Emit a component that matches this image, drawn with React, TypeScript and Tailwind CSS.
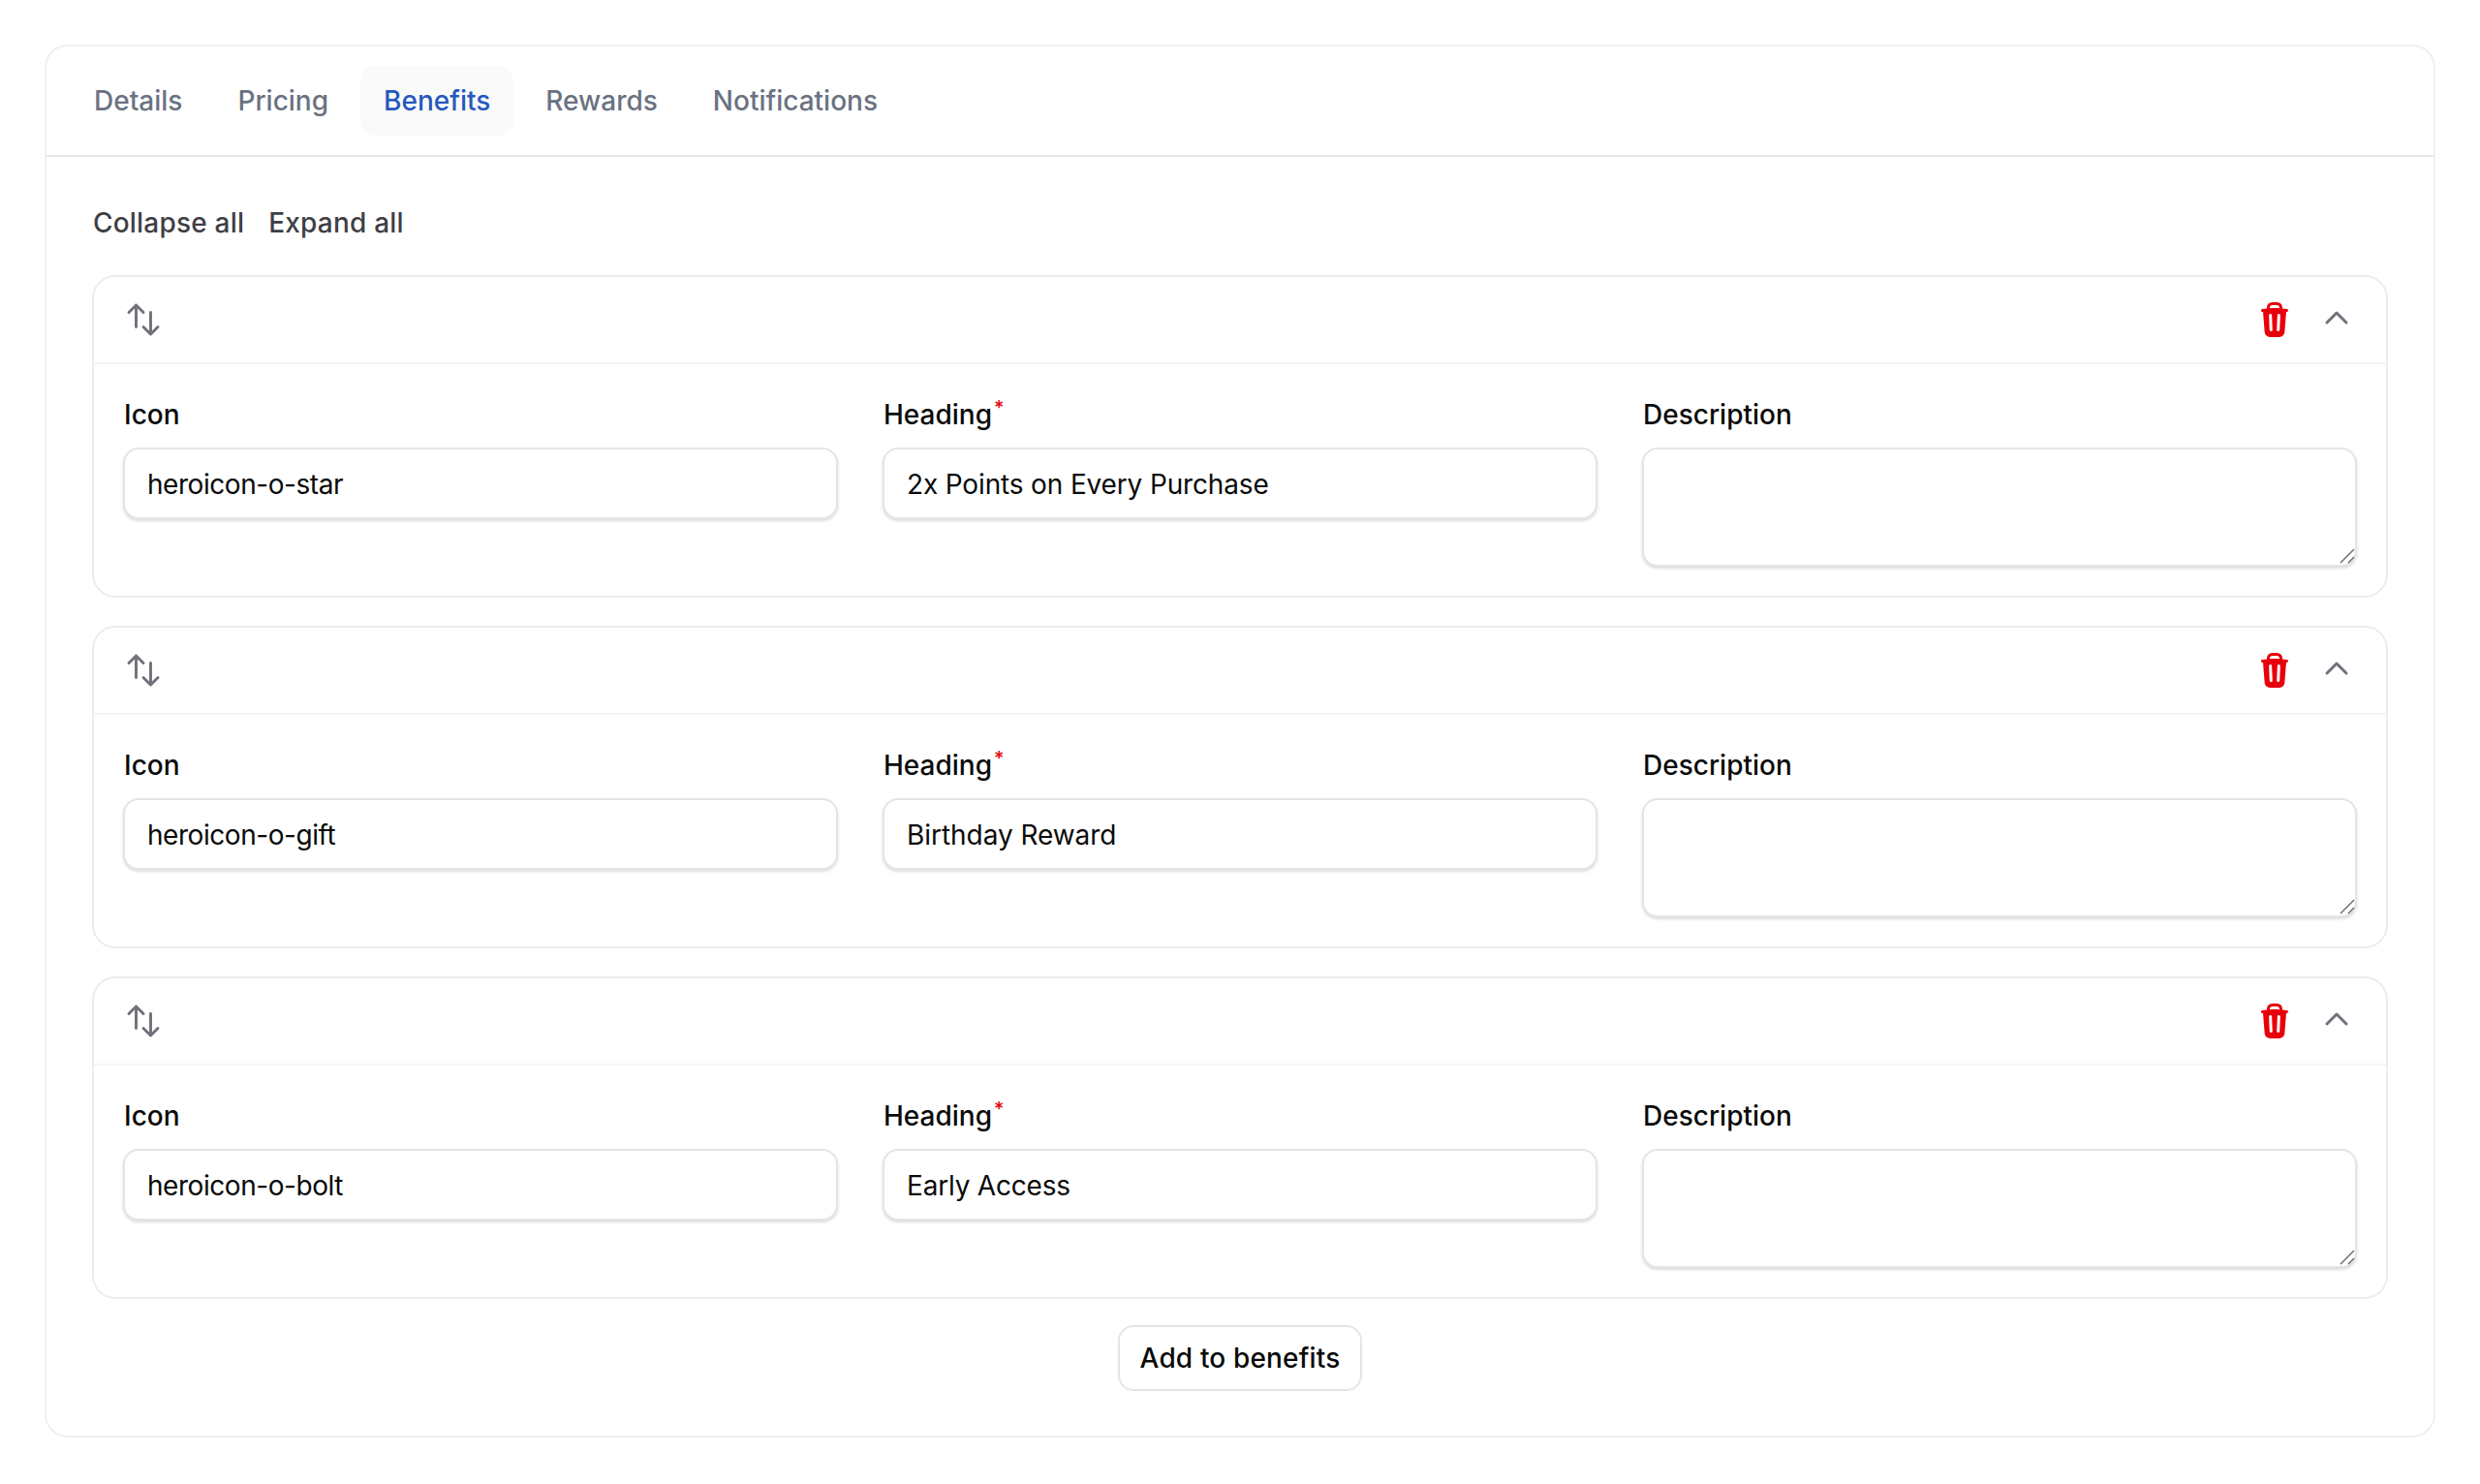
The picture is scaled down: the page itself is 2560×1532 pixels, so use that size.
import { HiMiniTrash } from 'react-icons/hi2';

const tabs = ['Details', 'Pricing', 'Benefits', 'Rewards', 'Notifications'];

const benefits = [
  { icon: 'heroicon-o-star', heading: '2x Points on Every Purchase', headingTracking: 'tracking-[-0.15px]' },
  { icon: 'heroicon-o-gift', heading: 'Birthday Reward', headingTracking: 'tracking-[-0.05px]' },
  { icon: 'heroicon-o-bolt', heading: 'Early Access', headingTracking: 'tracking-[-0.2px]' },
];

function BenefitItem({ icon, heading, headingTracking }: { icon: string; heading: string; headingTracking: string }) {
  return (
    <div className="rounded-[24px] border-2 border-[#ededed] bg-white">
      <div className="flex h-[90px] items-center justify-between border-b-2 border-[#f4f4f5] pl-[31px] pr-[35px]">
        <svg className="h-10 w-10 text-[#71717b]" viewBox="0 0 24 24" fill="none" stroke="currentColor" strokeWidth="1.75" strokeLinecap="round" strokeLinejoin="round">
          <path d="M3 7.5 7.5 3m0 0L12 7.5M7.5 3v13.5m13.5 0L16.5 21m0 0L12 16.5m4.5 4.5V7.5" />
        </svg>
        <div className="flex items-center gap-[28px]">
          <HiMiniTrash className="h-10 w-10 text-[#e7000b]" />
          <svg className="-mt-1 h-8 w-8 text-[#71717b]" viewBox="0 0 24 24" fill="none" stroke="currentColor" strokeWidth="2.2" strokeLinecap="round" strokeLinejoin="round">
            <path d="m4.5 15.75 7.5-7.5 7.5 7.5" />
          </svg>
        </div>
      </div>
      <div className="grid grid-cols-3 gap-[46px] px-[30px] pb-[30px] pt-[32px]">
        <Field label="Icon">
          <TextInput value={icon} tracking="tracking-[-0.45px]" />
        </Field>
        <Field label="Heading" required>
          <TextInput value={heading} tracking={headingTracking} />
        </Field>
        <Field label="Description">
          <div className="relative">
            <textarea
              readOnly
              className="block h-[123px] w-full resize-none rounded-2xl border-2 border-[#e5e5e5] bg-white shadow-[0_2px_3px_rgba(0,0,0,0.14)] outline-none"
            />
            <svg className="absolute bottom-[3px] right-[2px] h-4 w-4" viewBox="0 0 16 16" fill="none" stroke="#666" strokeWidth="1.4">
              <path d="M1 15 15 1M9 15l6-6" />
            </svg>
          </div>
        </Field>
      </div>
    </div>
  );
}

function Field({ label, required, children }: { label: string; required?: boolean; children: React.ReactNode }) {
  return (
    <div>
      <div className="mb-[14px] h-10 pl-[1px] text-[28px] font-medium leading-10 text-[#0a0a0a]">
        {label}
        {required && <sup className="ml-[2px] text-[20px] font-medium leading-none text-[#e7000b]">*</sup>}
      </div>
      {children}
    </div>
  );
}

function TextInput({ value, tracking }: { value: string; tracking: string }) {
  return (
    <input
      readOnly
      value={value}
      className={`block h-[74px] w-full rounded-2xl border-2 border-[#e5e5e5] bg-white px-[23px] pt-[2px] text-[28px] text-[#0a0a0a] shadow-[0_2px_3px_rgba(0,0,0,0.14)] outline-none ${tracking}`}
    />
  );
}

export default function App() {
  return (
    <div className="min-h-[1532px] bg-white px-[46px] pb-[46px] pt-[46px] font-['Inter',sans-serif]">
      <div className="rounded-[24px] border-2 border-[#f0f0f0] bg-white">
        <div className="flex h-[114px] items-center gap-[9px] border-b-2 border-[#e8e8e8] pl-[25px]">
          {tabs.map((tab) => (
            <div
              key={tab}
              className={
                tab === 'Benefits'
                  ? 'flex h-[72px] items-center rounded-2xl bg-[#fafafa] px-6 text-[28px] font-medium text-[#2658bd]'
                  : 'flex h-[72px] items-center rounded-2xl px-6 text-[28px] font-medium text-[#6a7282]'
              }
            >
              {tab}
            </div>
          ))}
        </div>
        <div className="px-[47px] pb-[46px] pt-[48px]">
          <div className="mb-[34px] flex h-10 gap-[25px] pl-[1px] text-[28px] font-medium leading-10 tracking-[0.2px] text-[#3f3f46]">
            <span>Collapse all</span>
            <span>Expand all</span>
          </div>
          <div className="flex flex-col gap-[29px]">
            {benefits.map((b) => (
              <BenefitItem key={b.icon} icon={b.icon} heading={b.heading} headingTracking={b.headingTracking} />
            ))}
          </div>
          <div className="mt-[27px] flex justify-center">
            <div className="flex h-[68px] w-[252px] items-center justify-center rounded-2xl border-2 border-[#e5e5e5] bg-white text-[28px] font-medium tracking-[0.15px] text-[#0a0a0a]">
              Add to benefits
            </div>
          </div>
        </div>
      </div>
    </div>
  );
}
